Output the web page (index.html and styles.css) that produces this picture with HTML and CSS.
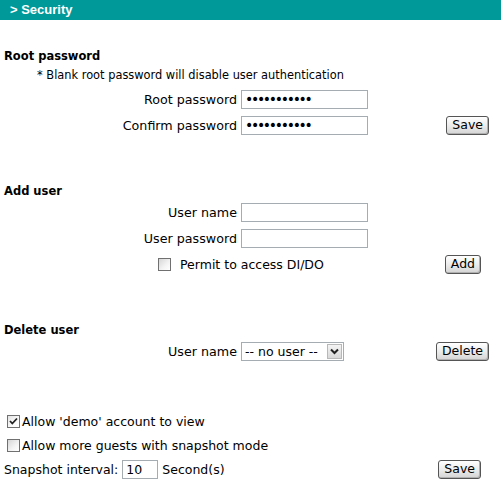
FILE: index.html
```html
<!DOCTYPE html>
<html>
<head>
<meta charset="utf-8">
<title>Security</title>
<link rel="stylesheet" href="styles.css">
</head>
<body>
<div class="header">&gt; Security</div>
<div class="content">
  <section class="section first">
    <div class="section-title">Root password</div>
    <div class="note">* Blank root password will disable user authentication</div>
    <div class="row">
      <label class="label">Root password</label>
      <input class="text-input pw" type="password" value="abcdefghijk">
    </div>
    <div class="row">
      <label class="label">Confirm password</label>
      <input class="text-input pw" type="password" value="abcdefghijk">
      <button class="btn">Save</button>
    </div>
  </section>

  <section class="section">
    <div class="section-title">Add user</div>
    <div class="row">
      <label class="label">User name</label>
      <input class="text-input" type="text" value="">
    </div>
    <div class="row">
      <label class="label">User password</label>
      <input class="text-input" type="text" value="">
    </div>
    <div class="row">
      <span class="check-wrap permit"><span class="checkbox"></span><span class="check-text">Permit to access DI/DO</span></span>
      <button class="btn btn-inset">Add</button>
    </div>
  </section>

  <section class="section">
    <div class="section-title">Delete user</div>
    <div class="row">
      <label class="label">User name</label>
      <span class="select"><span class="select-text">-- no user --</span><span class="select-arrow"><svg width="9" height="7" viewBox="0 0 9 7"><path d="M1 1.5 L4.5 5 L8 1.5" fill="none" stroke="#222" stroke-width="2"/></svg></span></span>
      <button class="btn">Delete</button>
    </div>
  </section>

  <section class="section options">
    <div class="opt-row">
      <span class="checkbox checked"><svg width="11" height="11" viewBox="0 0 11 11"><path d="M2 5 L4.3 7.5 L9 2.5" fill="none" stroke="#222" stroke-width="1.8"/></svg></span><span class="opt-text">Allow 'demo' account to view</span>
    </div>
    <div class="opt-row">
      <span class="checkbox"></span><span class="opt-text">Allow more guests with snapshot mode</span>
    </div>
    <div class="opt-row">
      <span class="snap-label">Snapshot interval:</span>
      <input class="text-input small" type="text" value="10">
      <span class="snap-unit">Second(s)</span>
      <button class="btn btn-inset">Save</button>
    </div>
  </section>
</div>
</body>
</html>
```

FILE: styles.css
```css
html, body {
  margin: 0;
  padding: 0;
  background: #ffffff;
}

body {
  font-family: "DejaVu Sans", Verdana, sans-serif;
  font-size: 12.5px;
  color: #000000;
}

.header {
  height: 20px;
  line-height: 20px;
  background: #009999;
  color: #ffffff;
  font-family: "Liberation Sans", Arial, sans-serif;
  font-weight: bold;
  font-size: 13px;
  padding-left: 10px;
}

.content {
  padding: 0 12px 0 4px;
}

.section {
  margin-top: 45px;
}

.section.first {
  margin-top: 28px;
}

.section.options {
  margin-top: 45px;
}

.section-title {
  font-weight: bold;
  font-size: 11.5px;
  height: 16px;
  line-height: 16px;
}

.note {
  height: 22px;
  line-height: 22px;
  padding-left: 33px;
  font-size: 11.4px;
}

.row {
  display: flex;
  align-items: center;
  height: 26px;
}

.label {
  width: 233px;
  margin-right: 4px;
  text-align: right;
  white-space: nowrap;
  font-size: 12.7px;
}

.text-input {
  box-sizing: border-box;
  width: 127px;
  height: 19px;
  border: 1px solid #a5acb2;
  padding: 0 3px;
  margin: 0;
  font-family: "DejaVu Sans", Verdana, sans-serif;
  font-size: 12.5px;
  background: #ffffff;
  outline: none;
}

.text-input.pw {
  font-size: 14px;
  letter-spacing: -2.3px;
  padding-left: 3px;
}

.text-input.small {
  width: 36px;
}

.btn {
  margin-left: auto;
  box-sizing: border-box;
  height: 19px;
  padding: 0 5px;
  border: 1px solid #555555;
  border-radius: 3px;
  background: linear-gradient(#ffffff, #ececec 50%, #d4d4d4);
  box-shadow: inset -1px -1px 0 #b0b0b0;
  font-family: "DejaVu Sans", Verdana, sans-serif;
  font-size: 12.5px;
  color: #000000;
  line-height: 16px;
}

.btn-inset {
  margin-right: 8px;
}

.check-wrap {
  display: flex;
  align-items: center;
}

.permit {
  padding-left: 154px;
}

.checkbox {
  box-sizing: border-box;
  display: inline-flex;
  align-items: center;
  justify-content: center;
  width: 13px;
  height: 13px;
  border: 1px solid #707070;
  background: linear-gradient(135deg, #d6d6d6, #f4f4f4 60%, #ffffff);
}

.checkbox.checked {
  background: linear-gradient(135deg, #e4e4e4, #fafafa 60%, #ffffff);
}

.check-text {
  margin-left: 9px;
}

.select {
  box-sizing: border-box;
  display: inline-flex;
  align-items: stretch;
  width: 103px;
  height: 19px;
  border: 1px solid #a5acb2;
  background: #ffffff;
}

.select-text {
  flex: 1;
  padding-left: 3px;
  line-height: 17px;
  white-space: nowrap;
}

.select-arrow {
  box-sizing: border-box;
  width: 15px;
  margin: 1px;
  display: flex;
  align-items: center;
  justify-content: center;
  border: 1px solid #b8b8b8;
  background: linear-gradient(#f4f4f4, #d8d8d8);
}

.opt-row {
  display: flex;
  align-items: center;
  height: 24px;
}

.options .checkbox {
  margin-left: 3px;
}

.opt-text {
  margin-left: 2px;
}

.snap-label {
  margin-right: 4px;
}

.snap-unit {
  margin-left: 4px;
}
```
